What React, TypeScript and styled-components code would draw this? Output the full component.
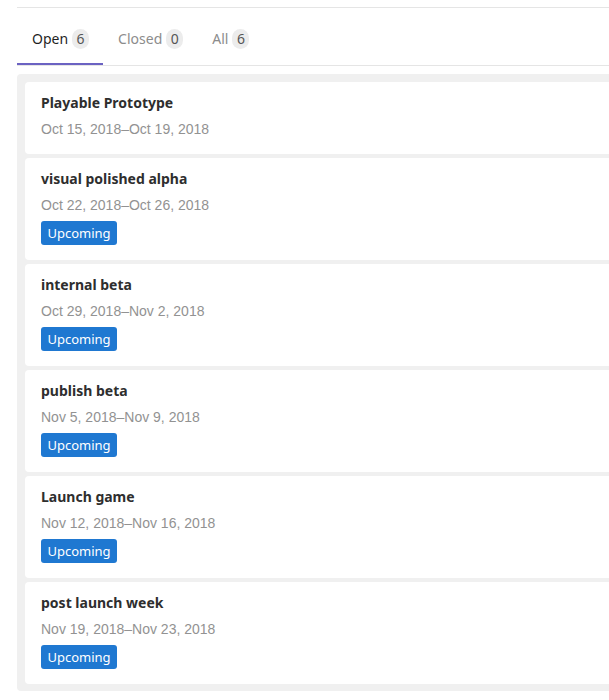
import styled, { createGlobalStyle } from "styled-components"

const GlobalStyle = createGlobalStyle`
  body {
    margin: 0;
    background: #fff;
    overflow: hidden;
    font-family: "Noto Sans", "Liberation Sans", sans-serif;
  }
`

type Milestone = { title: string; dates: string; upcoming: boolean }

const milestones: Milestone[] = [
  { title: "Playable Prototype", dates: "Oct 15, 2018–Oct 19, 2018", upcoming: false },
  { title: "visual polished alpha", dates: "Oct 22, 2018–Oct 26, 2018", upcoming: true },
  { title: "internal beta", dates: "Oct 29, 2018–Nov 2, 2018", upcoming: true },
  { title: "publish beta", dates: "Nov 5, 2018–Nov 9, 2018", upcoming: true },
  { title: "Launch game", dates: "Nov 12, 2018–Nov 16, 2018", upcoming: true },
  { title: "post launch week", dates: "Nov 19, 2018–Nov 23, 2018", upcoming: true },
]

const tabs = [
  { label: "Open", count: 6, active: true },
  { label: "Closed", count: 0, active: false },
  { label: "All", count: 6, active: false },
]

export default function App() {
  return (
    <>
      <GlobalStyle />
      <Page>
        <TabBar>
          {tabs.map((t) => (
            <Tab key={t.label} $active={t.active}>
              {t.label}
              <Count>{t.count}</Count>
            </Tab>
          ))}
        </TabBar>
        <List>
          {milestones.map((m) => (
            <Card key={m.title}>
              <Title>{m.title}</Title>
              <Dates>{m.dates}</Dates>
              {m.upcoming && <Badge>Upcoming</Badge>}
            </Card>
          ))}
        </List>
      </Page>
    </>
  )
}

// wider than the window on purpose: the list runs off the right edge
const Page = styled.div`
  margin: 7px 0 0 17px;
  width: 640px;
  border-top: 1px solid #e5e5e5;
`

const TabBar = styled.div`
  display: flex;
  height: 57px;
  border-bottom: 1px solid #e5e5e5;
`

const Tab = styled.div<{ $active: boolean }>`
  display: flex;
  align-items: center;
  gap: 4px;
  padding: 4px 14px 0 15px;
  font-size: 14px;
  color: ${(p) => (p.$active ? "#1f1f1f" : "#8c8c8c")};
  box-shadow: ${(p) => (p.$active ? "inset 0 -2px 0 #6b62c2" : "none")};
`

const Count = styled.span`
  display: inline-flex;
  align-items: center;
  justify-content: center;
  box-sizing: border-box;
  min-width: 17px;
  height: 20px;
  padding: 0 4px;
  border-radius: 9px;
  background: #ececec;
  color: #555;
  font-size: 14px;
`

const List = styled.div`
  margin-top: 8px;
  background: #f0f0f0;
  border-radius: 4px;
  padding: 8px 0 7px 8px;
  display: flex;
  flex-direction: column;
  gap: 4px;
`

const Card = styled.div`
  background: #fff;
  border-radius: 4px;
  padding: 12px 16px 15px;
  display: flex;
  flex-direction: column;
  align-items: flex-start;
`

const Title = styled.div`
  font-weight: 700;
  font-size: 14px;
  line-height: 18px;
  color: #2e2e2e;
`

const Dates = styled.div`
  margin-top: 7px;
  font-family: "Liberation Sans", Arial, sans-serif;
  font-size: 14px;
  line-height: 20px;
  color: #929292;
`

const Badge = styled.span`
  margin-top: 6px;
  display: inline-flex;
  align-items: center;
  justify-content: center;
  width: 76px;
  height: 24px;
  border-radius: 3px;
  background: #1f78d1;
  color: #fff;
  font-size: 13px;
`
